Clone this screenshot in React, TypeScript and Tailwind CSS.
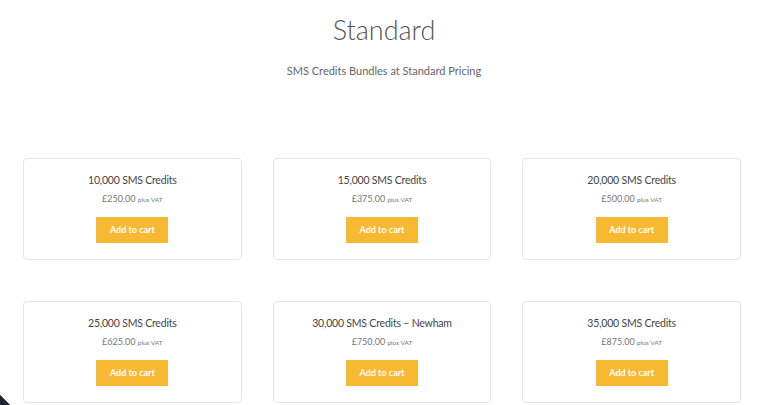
const products = [
  { name: "10,000 SMS Credits", price: "£250.00" },
  { name: "15,000 SMS Credits", price: "£375.00" },
  { name: "20,000 SMS Credits", price: "£500.00" },
  { name: "25,000 SMS Credits", price: "£625.00" },
  { name: "30,000 SMS Credits – Newham", price: "£750.00" },
  { name: "35,000 SMS Credits", price: "£875.00" },
];

const ProductCard = ({ name, price }: { name: string; price: string }) => {
  return (
    <div className="h-[102px] flex flex-col items-center border border-[#e6e6e6] rounded-[4px] pt-[14px]">
      <h3 className="text-[10.5px] leading-[14px] tracking-[-0.2px] text-[#444]">{name}</h3>
      <p className="mt-[6px] text-[9px] leading-[12px] text-[#777]">
        {price} <span className="text-[6.5px]">plus VAT</span>
      </p>
      <button className="mt-[11px] w-[72px] h-[26px] bg-[#f8b932] text-white text-[9px] font-bold">
        Add to cart
      </button>
    </div>
  );
};

export default function App() {
  return (
    <div
      className="relative w-full h-[405px] overflow-hidden bg-white"
      style={{ fontFamily: "Lato, 'Noto Sans', sans-serif" }}
    >
      <div className="flex flex-col items-center pt-[12px]">
        <h1 className="text-[27px] leading-[36px] font-light text-[#555]">Standard</h1>
        <p className="mt-[16px] text-[11px] leading-[14px] text-[#666]">
          SMS Credits Bundles at Standard Pricing
        </p>
      </div>
      <div className="grid grid-cols-3 gap-x-[31px] gap-y-[41px] pl-[23px] pr-[27px] mt-[80px]">
        {products.map((p) => (
          <ProductCard key={p.name} name={p.name} price={p.price} />
        ))}
      </div>
      <div className="absolute left-[-12px] bottom-[-12px] w-[20px] h-[20px] bg-[#1d2331] rotate-45" />
    </div>
  );
}
